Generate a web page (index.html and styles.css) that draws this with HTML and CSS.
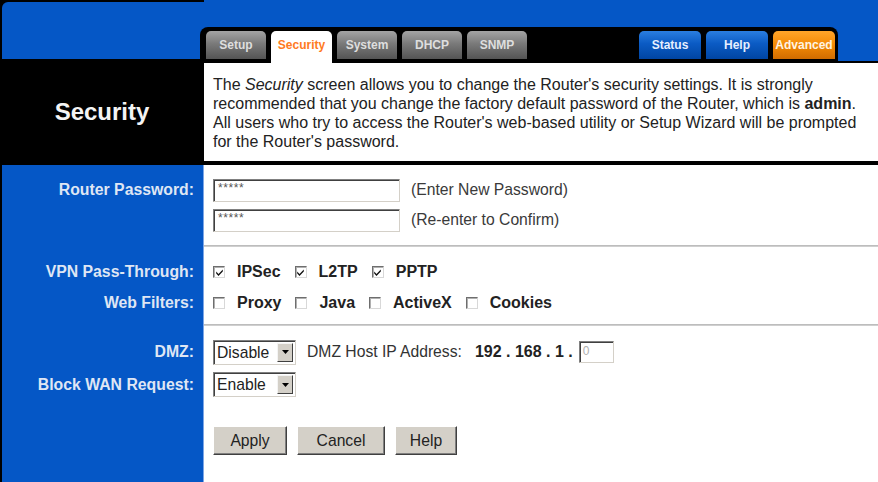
FILE: index.html
```html
<!DOCTYPE html>
<html>
<head>
<meta charset="utf-8">
<title>Security</title>
<link rel="stylesheet" href="styles.css">
</head>
<body>
<div class="page">
  <header class="header">
    <div class="brand">
      <div class="brand-top"></div>
      <div class="brand-title">Security</div>
    </div>
    <div class="head-right">
      <div class="tabstrip">
        <nav class="tabbar">
          <div class="tabs-group">
            <span class="tab tab-gray">Setup</span>
            <span class="tab tab-active">Security</span>
            <span class="tab tab-gray">System</span>
            <span class="tab tab-gray">DHCP</span>
            <span class="tab tab-gray">SNMP</span>
          </div>
          <div class="tabs-group">
            <span class="tab tab-blue">Status</span>
            <span class="tab tab-blue">Help</span>
            <span class="tab tab-orange">Advanced</span>
          </div>
        </nav>
      </div>
      <div class="desc">
        The <i>Security</i> screen allows you to change the Router's security settings. It is strongly<br>
        recommended that you change the factory default password of the Router, which is <b>admin</b>.<br>
        All users who try to access the Router's web-based utility or Setup Wizard will be prompted<br>
        for the Router's password.
      </div>
    </div>
  </header>

  <main class="form">
    <div class="row row-pw">
      <div class="label">Router Password:</div>
      <div class="field">
        <div class="text-input">*****</div>
        <span class="hint">(Enter New Password)</span>
      </div>
    </div>
    <div class="row row-pw">
      <div class="label"></div>
      <div class="field">
        <div class="text-input">*****</div>
        <span class="hint">(Re-enter to Confirm)</span>
      </div>
    </div>
    <div class="row row-sep1">
      <div></div>
      <div class="sep"></div>
    </div>
    <div class="row row-vpn">
      <div class="label">VPN Pass-Through:</div>
      <div class="field checks">
        <span class="check"><span class="cb"><svg viewBox="0 0 9 9" width="9" height="9"><path d="M1.2 3.6 L3.5 5.9 L7.8 1.6 L7.8 3.6 L3.5 7.9 L1.2 5.6 Z" fill="#111"/></svg></span>IPSec</span>
        <span class="check"><span class="cb"><svg viewBox="0 0 9 9" width="9" height="9"><path d="M1.2 3.6 L3.5 5.9 L7.8 1.6 L7.8 3.6 L3.5 7.9 L1.2 5.6 Z" fill="#111"/></svg></span>L2TP</span>
        <span class="check"><span class="cb"><svg viewBox="0 0 9 9" width="9" height="9"><path d="M1.2 3.6 L3.5 5.9 L7.8 1.6 L7.8 3.6 L3.5 7.9 L1.2 5.6 Z" fill="#111"/></svg></span>PPTP</span>
      </div>
    </div>
    <div class="row row-web">
      <div class="label">Web Filters:</div>
      <div class="field checks">
        <span class="check"><span class="cb"></span>Proxy</span>
        <span class="check"><span class="cb"></span>Java</span>
        <span class="check"><span class="cb"></span>ActiveX</span>
        <span class="check"><span class="cb"></span>Cookies</span>
      </div>
    </div>
    <div class="row row-sep2">
      <div></div>
      <div class="sep"></div>
    </div>
    <div class="row row-dmz">
      <div class="label">DMZ:</div>
      <div class="field">
        <div class="select"><span class="select-value">Disable</span><span class="select-btn"><svg viewBox="0 0 7 4" width="7" height="4"><path d="M0 0 H7 L3.5 4 Z" fill="#000"/></svg></span></div>
        <span class="dmz-text">DMZ Host IP Address:</span>
        <span class="ip">192 . 168 . 1 .</span>
        <div class="small-input">0</div>
      </div>
    </div>
    <div class="row row-block">
      <div class="label">Block WAN Request:</div>
      <div class="field">
        <div class="select"><span class="select-value">Enable</span><span class="select-btn"><svg viewBox="0 0 7 4" width="7" height="4"><path d="M0 0 H7 L3.5 4 Z" fill="#000"/></svg></span></div>
      </div>
    </div>
    <div class="row row-actions">
      <div></div>
      <div class="field actions">
        <button class="btn btn-apply">Apply</button>
        <button class="btn btn-cancel">Cancel</button>
        <button class="btn btn-help">Help</button>
      </div>
    </div>
  </main>
</div>
</body>
</html>
```

FILE: styles.css
```css
html, body {
  margin: 0;
  padding: 0;
}
body {
  background: #000;
  font-family: "Liberation Sans", Arial, sans-serif;
}
.page {
  width: 878px;
  height: 482px;
  display: flex;
  flex-direction: column;
  overflow: hidden;
}
.header {
  display: flex;
  height: 165px;
  flex: none;
}
.brand {
  width: 204px;
  flex: none;
  display: flex;
  flex-direction: column;
}
.brand-top {
  height: 57px;
  margin: 2px 0 0 2px;
  background: #0557c6;
  border-top-left-radius: 6px;
}
.brand-title {
  flex: 1;
  background: #000;
  color: #f4f4f4;
  font-weight: bold;
  font-size: 24px;
  display: flex;
  align-items: center;
  justify-content: center;
}
.head-right {
  flex: 1;
  min-width: 0;
  display: flex;
  flex-direction: column;
}
.tabstrip {
  height: 61px;
  flex: none;
  background: #0557c6;
  border-bottom: 2px solid #000;
  display: flex;
  align-items: flex-end;
}
.tabbar {
  margin-left: -4px;
  width: 638px;
  height: 34px;
  box-sizing: border-box;
  padding: 0 3px 0 6px;
  background: #000;
  border-radius: 8px 8px 0 0;
  display: flex;
  justify-content: space-between;
  align-items: flex-end;
}
.tabs-group {
  display: flex;
  gap: 5px;
  align-items: flex-end;
}
.tab {
  width: 60px;
  height: 28px;
  margin-bottom: 2px;
  border-radius: 5px 5px 0 0;
  display: flex;
  align-items: center;
  justify-content: center;
  font-size: 12px;
  font-weight: bold;
  box-sizing: border-box;
}
.tab-gray {
  background: linear-gradient(#a4a4a4, #7a7a7a 45%, #545454);
  color: #dedede;
}
.tab-active {
  width: 61px;
  height: 32px;
  margin-bottom: -2px;
  padding-bottom: 4px;
  background: #fff;
  color: #ff7a22;
}
.tab-blue {
  width: 62px;
  background: linear-gradient(#2a7ee0, #0b5bc4 45%, #0045a2);
  color: #e6efff;
}
.tab-orange {
  width: 62px;
  background: linear-gradient(#ffa52a, #f38a06 50%, #cf6c00);
  color: #fff4e2;
}
.desc {
  flex: 1;
  background: #fff;
  border-bottom: 4px solid #000;
  padding: 12px 0 0 9px;
  font-size: 16px;
  line-height: 19px;
  color: #222;
  white-space: nowrap;
  overflow: hidden;
}
.form {
  flex: 1;
  background: linear-gradient(90deg, #000 0 2px, #0557c6 2px 203px, #7da6e6 203px 204px, #fff 204px);
  padding-top: 10px;
}
.row {
  display: grid;
  grid-template-columns: 204px 1fr;
  align-items: center;
}
.row-pw { height: 30px; }
.row-sep1 { height: 21px; }
.row-vpn { height: 32px; }
.row-web { height: 30px; }
.row-sep2 { height: 14px; }
.row-dmz { height: 40px; }
.row-block { height: 24px; }
.row-actions { height: 29px; margin-top: 30px; }
.label {
  text-align: right;
  padding-right: 10px;
  color: #dfe6f4;
  font-weight: bold;
  font-size: 15.8px;
  white-space: nowrap;
}
.field {
  padding-left: 9px;
  display: flex;
  align-items: center;
  white-space: nowrap;
}
.text-input {
  width: 187px;
  height: 23px;
  box-sizing: border-box;
  border: 1px solid;
  border-color: #808080 #d4d0c8 #d4d0c8 #808080;
  box-shadow: inset 1px 1px #404040;
  background: #fff;
  font-size: 12px;
  line-height: 14px;
  letter-spacing: 0.6px;
  color: #555;
  padding: 1px 0 0 4px;
}
.hint {
  margin-left: 11px;
  font-size: 15.7px;
  color: #3a3a3a;
}
.sep {
  height: 2px;
  background: #cfcfcf;
  border-top: 1px solid #bdbdbd;
  box-sizing: border-box;
}
.checks {
  gap: 14px;
}
.check {
  display: flex;
  align-items: center;
  gap: 12px;
  font-weight: bold;
  font-size: 16px;
  color: #222;
}
.cb {
  width: 12px;
  height: 12px;
  box-sizing: border-box;
  border: 1px solid;
  border-color: #6e6e6e #d8d8d8 #d8d8d8 #6e6e6e;
  box-shadow: inset 1px 1px #b0b0b0;
  background: #fff;
  display: flex;
  align-items: center;
  justify-content: center;
}
.cb svg {
  display: block;
}
.select {
  width: 83px;
  height: 25px;
  box-sizing: border-box;
  border: 1px solid;
  border-color: #808080 #d4d0c8 #d4d0c8 #808080;
  box-shadow: inset 1px 1px #404040;
  background: #fff;
  display: flex;
  padding: 2px;
}
.select-value {
  flex: 1;
  font-size: 15.7px;
  line-height: 19px;
  color: #222;
  padding-left: 1px;
}
.select-btn {
  width: 16px;
  box-sizing: border-box;
  background: #d4d0c8;
  border: 1px solid;
  border-color: #f4f4f4 #404040 #404040 #f4f4f4;
  display: flex;
  align-items: center;
  justify-content: center;
}
.select-btn svg {
  display: block;
}
.dmz-text {
  margin-left: 11px;
  font-size: 15.7px;
  color: #333;
}
.ip {
  margin-left: 13px;
  font-weight: bold;
  font-size: 16px;
  color: #222;
}
.small-input {
  margin-left: 6px;
  width: 35px;
  height: 22px;
  box-sizing: border-box;
  border: 1px solid;
  border-color: #808080 #d4d0c8 #d4d0c8 #808080;
  box-shadow: inset 1px 1px #404040;
  background: #fff;
  font-size: 12px;
  line-height: 16px;
  color: #b0b0b0;
  padding: 1px 0 0 3px;
}
.actions {
  gap: 10px;
}
.btn {
  height: 29px;
  padding: 0;
  font-family: "Liberation Sans", Arial, sans-serif;
  font-size: 15.7px;
  color: #222;
  background: #d4d0c8;
  border: 1px solid;
  border-color: #fff #404040 #404040 #fff;
  box-shadow: inset -1px -1px #808080;
}
.btn-apply { width: 74px; }
.btn-cancel { width: 88px; }
.btn-help { width: 62px; }
```
